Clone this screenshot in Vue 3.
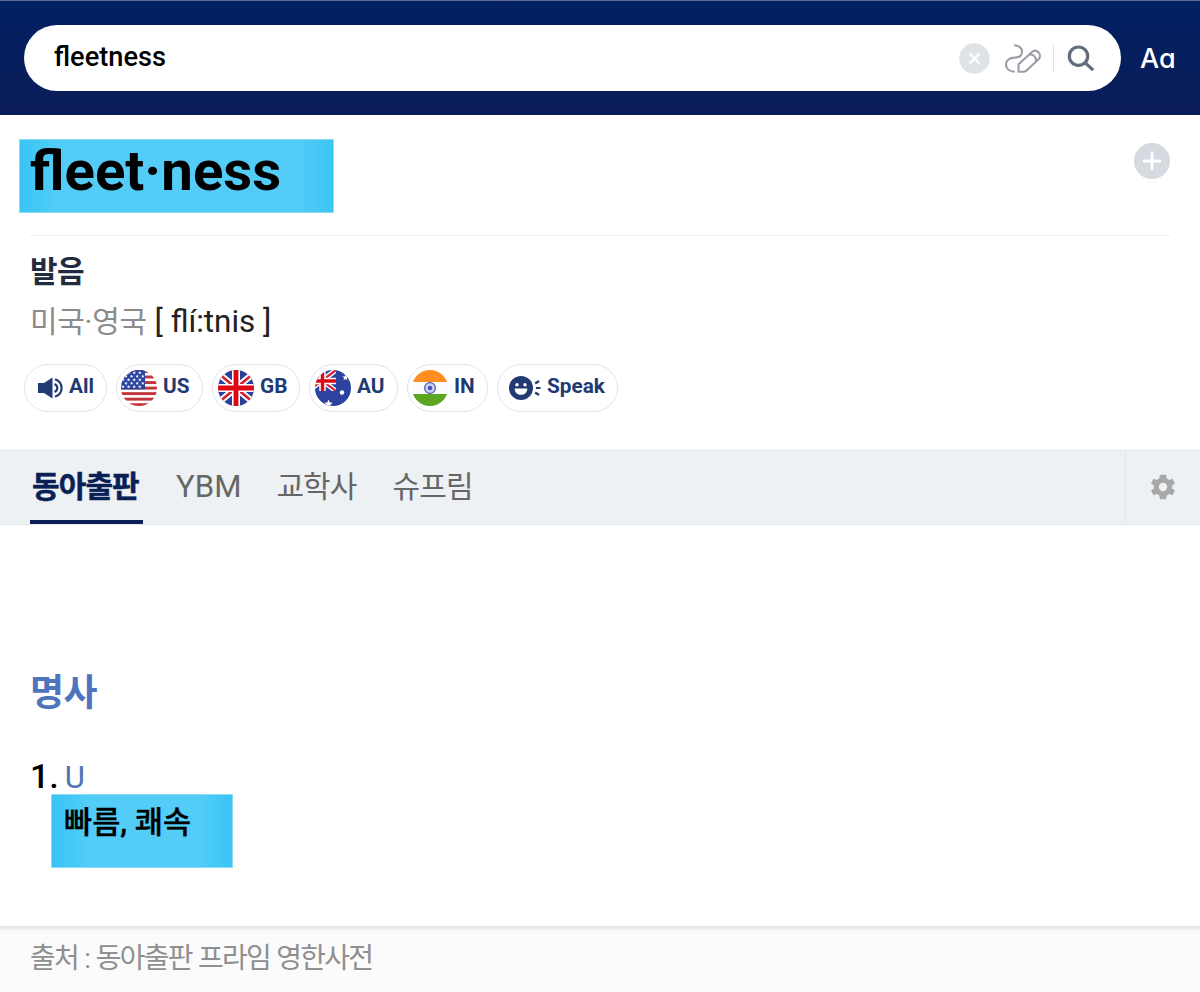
<template>
    <div class="page">
        <header class="top">
            <div class="search">
                <span class="query">fleetness</span>
                <svg class="clear" viewBox="0 0 31 31">
                    <circle cx="15.5" cy="15.5" r="15.3" />
                    <path d="M10.5 10.5 L20.5 20.5 M20.5 10.5 L10.5 20.5" />
                </svg>
                <svg class="scribble" viewBox="0 0 36 29">
                    <path d="M9 1.3 C14 1.3 17 4 17 7.4 C17 11 14.5 13.5 10 13.6 C4.5 13.7 1 16.6 1 20.6 C1 25 4.5 27.7 9.8 27.7" />
                    <path d="M13.5 27.7 V20.2 L26.8 8.2 C28.7 6.5 31.3 6.3 33.2 8.1 C35.4 10.2 35.5 13.2 33.6 15.2 L21.6 26.6 Q20.4 27.7 19 27.7 Z" />
                    <path d="M24.2 10.5 C28.2 10 31.4 12.8 31.2 17.4" />
                </svg>
                <span class="bar"></span>
                <svg class="magnifier" viewBox="0 0 28 28">
                    <circle cx="11.5" cy="12.2" r="9.2" />
                    <path d="M18.2 18.8 L26.2 26.2" />
                </svg>
            </div>
            <span class="font-size">Aa</span>
        </header>

        <section class="word">
            <h1 class="mark">fleet·ness</h1>
            <svg class="plus" viewBox="0 0 36 36">
                <circle cx="18" cy="18" r="18" />
                <path d="M9 18 H27 M18 9 V27" />
            </svg>
        </section>

        <section class="pron">
            <h2>발음</h2>
            <p><span class="region">미국·영국</span> [ flí:tnis ]</p>
            <div class="chips">
                <button v-for="chip in chips" :key="chip.id" :class="['chip', chip.id]">
                    <svg v-if="chip.id === 'all'" class="speaker" viewBox="0 0 25 22">
                        <path class="fill" d="M0 6 H6 L14.5 .5 V21.5 L6 16 H0 Z" />
                        <path d="M16.5 7 Q19.3 8.4 19.3 11 T16.5 15 M17 2.2 Q23.6 4.6 23.6 11 T17 19.8" />
                    </svg>
                    <svg v-else-if="chip.id === 'speak'" class="face" viewBox="0 0 32 24">
                        <circle class="fill" cx="12" cy="12" r="12" />
                        <circle class="eye" cx="8" cy="8.8" r="1.7" />
                        <circle class="eye" cx="16" cy="8.8" r="1.7" />
                        <path class="eye" d="M5.6 12.5 H18.4 C18.2 16.5 15.6 18.8 12 18.8 S5.8 16.5 5.6 12.5 Z" />
                        <path d="M26.2 7.5 L30 5 M27 12 H31.5 M26.2 16.5 L30 19" />
                    </svg>
                    <svg v-else class="flag" viewBox="0 0 36 36">
                        <g v-if="chip.id === 'us'">
                            <rect width="36" height="36" fill="#fff" />
                            <rect v-for="n in 7" :key="n" :y="(n - 1) * 5.54" width="36" height="2.9" fill="#c2353b" />
                            <rect width="24" height="19.4" fill="#2b45a0" />
                            <path v-for="(s, i) in stars" :key="i" :transform="`translate(${s[0]} ${s[1]}) scale(.45)`" :d="starPath" fill="#fff" />
                        </g>
                        <g v-else-if="chip.id === 'gb'">
                            <rect width="36" height="36" fill="#2b3f98" />
                            <path d="M0 3 L36 33 M36 3 L0 33" stroke="#fff" stroke-width="6.4" />
                            <path d="M0 3 L36 33 M36 3 L0 33" stroke="#d32030" stroke-width="2.6" />
                            <path d="M18 0 V36 M0 18 H36" stroke="#fff" stroke-width="8" />
                            <path d="M18 0 V36 M0 18 H36" stroke="#df0714" stroke-width="4.8" />
                        </g>
                        <g v-else-if="chip.id === 'au'">
                            <rect width="36" height="36" fill="#2c429f" />
                            <svg width="21" height="21" viewBox="0 0 21 21">
                                <path d="M-7 0 L21 21 M21 0 L-7 21" stroke="#fff" stroke-width="5" />
                                <path d="M-7 0 L21 21 M21 0 L-7 21" stroke="#d32030" stroke-width="2.2" />
                                <path d="M7.5 0 V21 M0 11 H21" stroke="#fff" stroke-width="6.4" />
                                <path d="M7.5 0 V21 M0 11 H21" stroke="#df0714" stroke-width="3.4" />
                            </svg>
                            <circle cx="27" cy="22.5" r="2.2" fill="#fff" />
                            <path transform="translate(13.5 34) scale(1.1)" :d="starPath" fill="#fff" />
                            <path transform="translate(30.5 7.5) scale(.8)" :d="starPath" fill="#fff" />
                        </g>
                        <g v-else>
                            <rect width="36" height="36" fill="#fafcff" />
                            <rect width="36" height="12" fill="#ff8d20" />
                            <rect y="24" width="36" height="12" fill="#5ca622" />
                            <circle cx="18" cy="18" r="5.4" fill="#cdd2f5" stroke="#4b5cb4" stroke-width="1.2" />
                            <circle cx="18" cy="18" r="2.3" fill="#4353b8" />
                        </g>
                    </svg>
                    <span>{{ chip.label }}</span>
                </button>
            </div>
        </section>

        <nav class="tabs">
            <a v-for="(tab, i) in tabs" :key="tab.name" :class="{ active: i === 0, latin: tab.latin }">{{ tab.name }}</a>
            <span class="settings">
                <svg viewBox="0 0 24 26">
                    <path fill-rule="evenodd" d="M9 .8 H15 L15.8 4.5 L18.2 5.9 L21.5 4.7 L24 9.4 L21.2 11.6 V14.4 L24 16.6 L21.5 21.3 L18.2 20.1 L15.8 21.5 L15 25.2 H9 L8.2 21.5 L5.8 20.1 L2.5 21.3 L0 16.6 L2.8 14.4 V11.6 L0 9.4 L2.5 4.7 L5.8 5.9 L8.2 4.5 Z M12 8.8 A4.2 4.2 0 1 0 12 17.2 A4.2 4.2 0 1 0 12 8.8 Z" />
                </svg>
            </span>
        </nav>

        <main class="meaning">
            <h3>명사</h3>
            <div class="entry">
                <span class="num">1.</span>
                <span class="type">U</span>
            </div>
            <p class="mark">빠름, 쾌속</p>
        </main>

        <footer class="source">출처 : 동아출판 프라임 영한사전</footer>
    </div>
</template>

<script setup>
const chips = [
    { id: 'all', label: 'All' },
    { id: 'us', label: 'US' },
    { id: 'gb', label: 'GB' },
    { id: 'au', label: 'AU' },
    { id: 'in', label: 'IN' },
    { id: 'speak', label: 'Speak' },
];

const tabs = [
    { name: '동아출판' },
    { name: 'YBM', latin: true },
    { name: '교학사' },
    { name: '슈프림' },
];

const starPath = 'M0 -4 L1.1 -1.3 L4 -1.2 L1.7 .6 L2.5 3.4 L0 1.8 L-2.5 3.4 L-1.7 .6 L-4 -1.2 L-1.1 -1.3 Z';

// staggered rows of stars in the canton
const stars = [];
for (let row = 0; row < 5; row++) {
    for (let x = row % 2 ? 5 : 2; x < 23; x += 5.6) {
        stars.push([x, 2.8 + row * 3.5]);
    }
}
</script>

<style>
body {
    background: #fff;
}
</style>

<style scoped>
.page {
    display: flex;
    flex-direction: column;
    width: 1200px;
    height: 992px;
    overflow: hidden;
    background: #fff;
    font-family: Roboto, "Noto Sans CJK KR", sans-serif;
}
.page * {
    box-sizing: border-box;
}
h1, h2, h3, p {
    margin: 0;
}
svg {
    display: block;
    flex: none;
    fill: none;
}
.top {
    display: flex;
    align-items: flex-start;
    height: 115px;
    padding: 24px 0 0 24px;
    border-top: 1px solid #5d6c8e;
    background: linear-gradient(#022064, #0a1d57);
}
.search {
    display: flex;
    align-items: center;
    width: 1097px;
    height: 66px;
    padding: 0 26px 0 30px;
    border-radius: 33px;
    background: #fff;
}
.query {
    flex: 1;
    padding-bottom: 3px;
    font-size: 27.2px;
    font-weight: 500;
    line-height: 32px;
    color: #000;
}
.clear {
    width: 31px;
    height: 31px;
    margin-right: 15px;
}
.clear circle {
    fill: #dfe2e6;
}
.clear path {
    stroke: #fff;
    stroke-width: 2.4;
}
.scribble {
    width: 36px;
    height: 29px;
    margin-right: 12px;
}
.scribble path {
    stroke: #9b9ea6;
    stroke-width: 2.1;
    stroke-linejoin: round;
}
.bar {
    width: 1px;
    height: 27px;
    margin-right: 13px;
    background: #e0e2e5;
}
.magnifier {
    width: 28px;
    height: 28px;
}
.magnifier circle, .magnifier path {
    stroke: #646d7b;
    stroke-width: 3.2;
}
.font-size {
    margin: 17px 0 0 19px;
    font-family: Inter, sans-serif;
    font-size: 27px;
    font-weight: 500;
    font-feature-settings: "cv11";
    line-height: 34px;
    color: #fff;
}
.word {
    display: flex;
    justify-content: space-between;
    align-items: flex-start;
    height: 121px;
    margin: 0 30px;
    padding-top: 24px;
    border-bottom: 1px solid #eceeef;
}
.mark {
    border: 1px solid #8cdcf8;
    background: linear-gradient(90deg, #3ac4f5, #53cdf7 40px, #53cdf7 calc(100% - 36px), #3ac4f5);
    color: #000;
}
.word .mark {
    width: 315px;
    height: 74px;
    margin-left: -11px;
    padding-left: 10px;
    font-size: 56.3px;
    font-weight: 700;
    line-height: 62px;
}
.plus {
    width: 36px;
    height: 36px;
    margin-top: 4px;
}
.plus circle {
    fill: #d6d9e0;
}
.plus path {
    stroke: #fff;
    stroke-width: 2.8;
}
.pron {
    height: 214px;
    padding: 16px 0 0 30px;
}
.pron h2 {
    font-size: 30px;
    font-weight: 700;
    line-height: 40px;
    letter-spacing: -0.5px;
    color: #222c40;
}
.pron p {
    margin-top: 9px;
    font-size: 31.4px;
    line-height: 42px;
    color: #222;
}
.region {
    font-size: 30px;
    letter-spacing: -0.3px;
    color: #8b8b8b;
}
.chips {
    display: flex;
    gap: 9px;
    margin: 21px 0 0 -6px;
}
.chip {
    display: flex;
    align-items: center;
    gap: 6px;
    height: 48px;
    padding: 0 0 0 4px;
    border: 1px solid #e1e5ec;
    border-radius: 24px;
    background: #fff;
    font-family: inherit;
    font-size: 20.8px;
    font-weight: 700;
    color: #223a72;
}
.chip span {
    padding-bottom: 4px;
}
.chip.all {
    width: 83px;
    padding-left: 13px;
}
.us {
    width: 87px;
}
.chip.gb {
    width: 88px;
    padding-left: 5px;
}
.chip.au {
    width: 89px;
    padding-left: 5px;
}
.in {
    width: 81px;
}
.chip.speak {
    width: 121px;
    padding-left: 11px;
}
.flag {
    width: 36px;
    height: 36px;
    border-radius: 50%;
}
.speaker {
    width: 25px;
    height: 22px;
}
.face {
    width: 32px;
    height: 24px;
}
.speaker path, .face path {
    stroke: #223a72;
    stroke-width: 2.2;
}
.chip .fill {
    fill: #223a72;
    stroke: none;
}
.face .eye {
    fill: #fff;
    stroke: none;
}
.tabs {
    display: flex;
    gap: 36px;
    height: 75px;
    padding-left: 30px;
    border-top: 1px solid #e2e6ea;
    border-bottom: 1px solid #e2e6ea;
    background: #edf1f4;
}
.tabs a {
    height: 73px;
    font-size: 30px;
    line-height: 72px;
    letter-spacing: -0.9px;
    color: #666;
}
.tabs .latin {
    margin-right: -1px;
    font-size: 31.2px;
    letter-spacing: 0;
}
.tabs .active {
    width: 113px;
    margin-right: -3px;
    padding-left: 2px;
    border-bottom: 4px solid #0a1f55;
    font-weight: 700;
    color: #0a1f55;
    -webkit-text-stroke: 0.5px #0a1f55;
}
.settings {
    display: flex;
    justify-content: center;
    align-items: center;
    width: 75px;
    margin-left: auto;
    padding-bottom: 1px;
    border-left: 1px solid #e2e6ea;
}
.settings svg {
    width: 24px;
    height: 26px;
    fill: #a7a7a7;
}
.meaning {
    height: 401px;
    padding: 144px 0 0 30px;
}
.meaning h3 {
    font-size: 37px;
    font-weight: 700;
    line-height: 50px;
    letter-spacing: -0.5px;
    color: #4e74bd;
}
.entry {
    display: flex;
    gap: 6px;
    height: 40px;
    margin-top: 35px;
    line-height: 47px;
}
.num {
    font-size: 34px;
    font-weight: 500;
    line-height: 45px;
    color: #000;
}
.type {
    font-size: 31px;
    color: #4e74b5;
}
.meaning .mark {
    width: 182px;
    height: 74px;
    margin-left: 21px;
    padding-left: 12px;
    font-size: 30.6px;
    font-weight: 500;
    line-height: 55px;
    -webkit-text-stroke: 0.3px #000;
}
.source {
    flex: 1;
    padding: 11px 30px;
    background: linear-gradient(#dfdfdf, #f5f5f5 4px, #fbfbfb 9px);
    font-size: 28px;
    line-height: 44px;
    letter-spacing: -1.75px;
    word-spacing: 1.1px;
    color: #8f8f8f;
}
</style>
